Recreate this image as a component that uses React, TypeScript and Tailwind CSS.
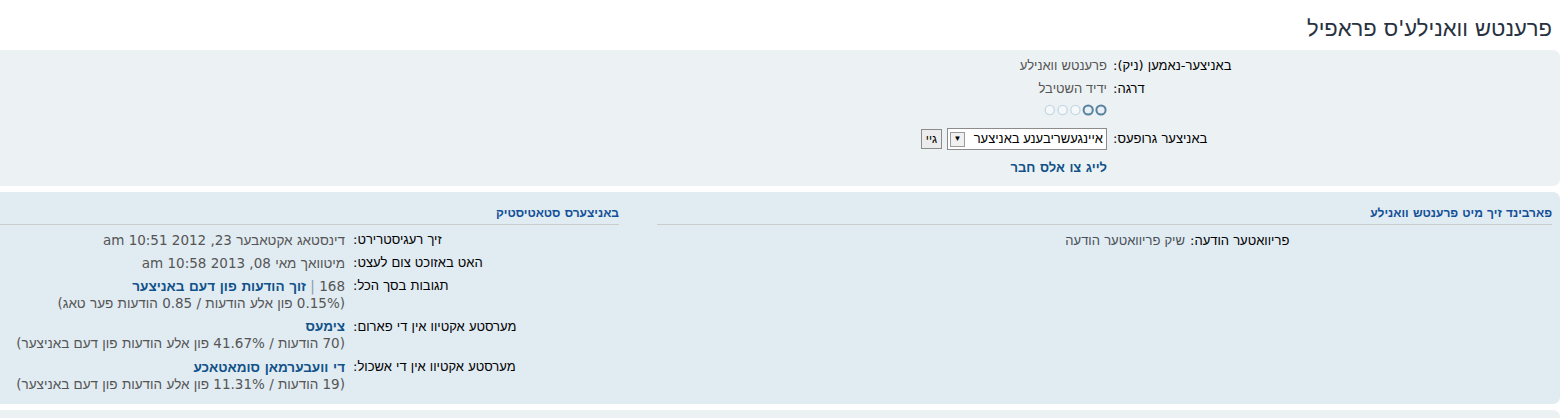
// Verdana-like runs for latin, digits and punctuation; Hebrew falls back to an Arial-like face
const hebrew = /([\u0590-\u05FF]+)/;

const T = ({ t }: { t: string }) => (
  <>
    {t.split(hebrew).map((part, i) =>
      part === "" ? null : i % 2 === 1 ? (
        <span key={i}>{part}</span>
      ) : (
        <span key={i} className="font-['DejaVu_Sans',sans-serif]">
          {part}
        </span>
      )
    )}
  </>
);

const rankDots = [true, true, false, false, false];

const statRows = [
  { label: "זיך רעגיסטרירט:", value: "דינסטאג אקטאבער 23, 2012 10:51 am" },
  { label: "האט באזוכט צום לעצט:", value: "מיטוואך מאי 08, 2013 10:58 am" },
];

const activeRows = [
  {
    label: "מערסטע אקטיוו אין די פארום:",
    link: "צימעס",
    note: "(70 הודעות / 41.67% פון אלע הודעות פון דעם באניצער)",
  },
  {
    label: "מערסטע אקטיוו אין די אשכול:",
    link: "די וועבערמאן סומאטאכע",
    note: "(19 הודעות / 11.31% פון אלע הודעות פון דעם באניצער)",
  },
];

const RankImage = () => (
  <svg width="66" height="12" viewBox="0 0 66 12">
    {rankDots.map((on, i) => (
      <circle
        key={i}
        cx={60 - i * 12.8}
        cy={6}
        r={4.6}
        fill={on ? "#e8f0f5" : "#f4f8fa"}
        stroke={on ? "#56829f" : "#c6d9e5"}
        strokeWidth={on ? 2 : 1.4}
      />
    ))}
  </svg>
);

const App = () => {
  return (
    <div
      dir="rtl"
      className="bg-white h-[418px] overflow-hidden text-[13px] leading-[16px] text-black font-['Liberation_Sans',Arial,sans-serif]"
    >
      <h2 className="h-[50px] pt-[16px] pr-[12px] text-[22px] leading-[26px] font-normal text-[#28313f]">
        <T t="פרענטש וואנילע'ס פראפיל" />
      </h2>

      {/* profile panel */}
      <div className="mr-[4px] h-[136px] rounded-tr-[7px] rounded-br-[7px] bg-[#ecf1f4] pr-[323px] pt-[8px]">
        <div className="flex">
          <span className="w-[124px] whitespace-nowrap text-left">
            <T t="באניצער-נאמען (ניק):" />
          </span>
          <span className="mr-[6px] text-[#555]">
            <T t="פרענטש וואנילע" />
          </span>
        </div>
        <div className="mt-[7px] flex">
          <span className="w-[124px] whitespace-nowrap text-left">
            <T t="דרגה:" />
          </span>
          <div className="mr-[6px] text-[#555]">
            <div>ידיד השטיבל</div>
            <div className="mt-[7px] flex">
              <RankImage />
            </div>
          </div>
        </div>
        <div className="mt-[12px] flex items-center">
          <span className="w-[124px] whitespace-nowrap text-left">
            <T t="באניצער גרופעס:" />
          </span>
          <div className="mr-[6px] flex items-center gap-[5px]">
            <div className="flex h-[22px] w-[160px] items-center justify-between border border-[#8c8c8c] bg-white pr-[3px] pl-[2px]">
              <span>איינגעשריבענע באניצער</span>
              <span className="flex h-[15px] w-[15px] items-center justify-center border border-[#9a9a9a] bg-[#f0f0f0] text-[8px] leading-none text-black">
                ▼
              </span>
            </div>
            <div className="flex h-[20px] w-[21px] items-center justify-center border border-[#8c8c8c] bg-[#ececec] text-[12px]">
              גיי
            </div>
          </div>
        </div>
        <div className="mt-[10px] flex">
          <span className="w-[124px]"></span>
          <a className="mr-[6px] font-bold text-[#105289]">
            <T t="לייג צו אלס חבר" />
          </a>
        </div>
      </div>

      {/* contact + statistics panel */}
      <div className="mt-[6px] mr-[4px] h-[212px] rounded-tr-[7px] rounded-br-[7px] bg-[#e1ebf2] pr-[8px] pt-[13px]">
        <div className="flex gap-[38px]">
          <div className="w-[895px] shrink-0">
            <h3 className="border-b border-[#cccccc] pb-[3px] text-[12px] font-bold leading-[16px] text-[#115098]">
              <T t="פארבינד זיך מיט פרענטש וואנילע" />
            </h3>
            <div className="mt-[8px] flex">
              <span className="w-[362px] whitespace-nowrap text-left">
                <T t="פריוואטער הודעה:" />
              </span>
              <a className="mr-[5px] text-[#4a4f57]">
                <T t="שיק פריוואטער הודעה" />
              </a>
            </div>
          </div>

          <div className="flex-1">
            <h3 className="border-b border-[#cccccc] pb-[3px] text-[12px] font-bold leading-[16px] text-[#115098]">
              <T t="באניצערס סטאטיסטיק" />
            </h3>
            <div className="mt-[7px] flex flex-col gap-[6px]">
              {statRows.map((row) => (
                <div key={row.label} className="flex">
                  <span className="w-[266px] whitespace-nowrap text-left">
                    <T t={row.label} />
                  </span>
                  <span className="mr-[8px] whitespace-nowrap text-[13.5px] text-[#555]">
                    <T t={row.value} />
                  </span>
                </div>
              ))}
              <div className="flex">
                <span className="w-[266px] whitespace-nowrap text-left">
                  <T t="תגובות בסך הכל:" />
                </span>
                <div className="mr-[8px] whitespace-nowrap text-[13.5px] text-[#555]">
                  <div>
                    <T t="168 " />
                    <span className="font-['DejaVu_Sans',sans-serif] text-[#8a9aa8]">|</span>
                    <T t=" " />
                    <a className="font-bold text-[#105289]">
                      <T t="זוך הודעות פון דעם באניצער" />
                    </a>
                  </div>
                  <div>
                    <T t="(0.15% פון אלע הודעות / 0.85 הודעות פער טאג)" />
                  </div>
                </div>
              </div>
              {activeRows.map((row) => (
                <div key={row.label} className="mt-[1px] flex">
                  <span className="w-[266px] whitespace-nowrap text-left">
                    <T t={row.label} />
                  </span>
                  <div className="mr-[8px] whitespace-nowrap text-[13.5px] text-[#555]">
                    <a className="font-bold text-[#105289]">
                      <T t={row.link} />
                    </a>
                    <div>
                      <T t={row.note} />
                    </div>
                  </div>
                </div>
              ))}
            </div>
          </div>
        </div>
      </div>

      <div className="mt-[6px] mr-[4px] h-[40px] rounded-tr-[7px] bg-[#ecf1f4]"></div>
    </div>
  );
};

export default App;
